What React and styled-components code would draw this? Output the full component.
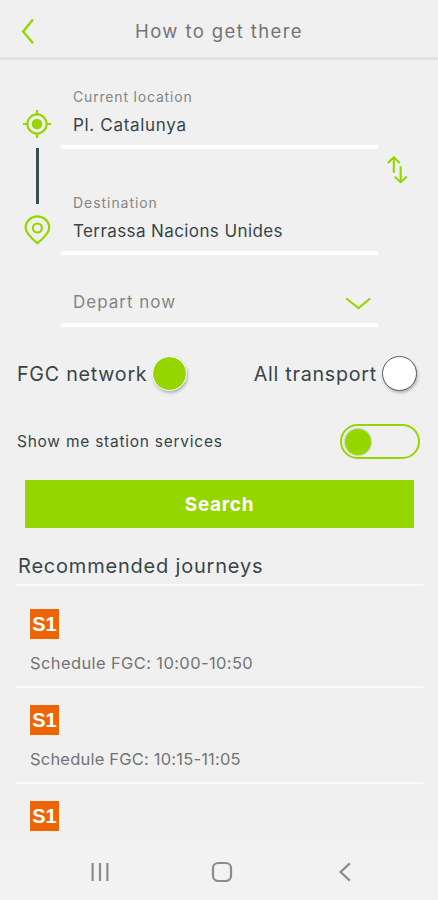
import React, { useState } from "react";
import styled, { createGlobalStyle } from "styled-components";

const journeys = [
  { id: 1, line: "S1", text: "Schedule FGC: 10:00-10:50", spacing: "0.38px" },
  { id: 2, line: "S1", text: "Schedule FGC: 10:15-11:05", spacing: "0.2px" },
  { id: 3, line: "S1" },
];

const App = () => {
  const [network, setNetwork] = useState("fgc");
  const [services, setServices] = useState(false);

  return (
    <>
      <GlobalStyle />
      <Screen>
        <Header>
          <BackButton aria-label="Back">
            <svg width="14" height="28" viewBox="0 0 14 28" fill="none" stroke="#96d600" strokeWidth="2.4">
              <path d="M12 2.5 2.2 14.5 12 26.2" />
            </svg>
          </BackButton>
          <Title>How to get there</Title>
        </Header>
        <Main>
          <Route>
            <RouteIcons>
              <svg width="30" height="30" viewBox="0 0 30 30" fill="none" stroke="#96d600" strokeWidth="2.2">
                <circle cx="15" cy="15" r="9.6" />
                <circle cx="15" cy="15" r="5.3" fill="#96d600" stroke="none" />
                <path d="M15 1v5M15 24v5M1 15h5M24 15h5" />
              </svg>
              <RouteLine />
              <svg width="30" height="32" viewBox="0 0 30 32" fill="none" stroke="#96d600" strokeWidth="2.2">
                <path d="M15.4 29.3C12 26 3.6 20.5 3.6 13.6a11.8 11.3 0 0 1 23.6 0C27.2 20.5 18.8 26 15.4 29.3Z" />
                <circle cx="15.4" cy="14" r="4.5" />
              </svg>
            </RouteIcons>
            <Fields>
              <Field>
                <Label $spacing="0.82px">Current location</Label>
                <Value $spacing="0.68px">Pl. Catalunya</Value>
              </Field>
              <Field>
                <Label $spacing="0.95px">Destination</Label>
                <Value $spacing="0.4px">Terrassa Nacions Unides</Value>
              </Field>
              <Select>
                Depart now
                <svg width="26" height="14" viewBox="0 0 26 14" fill="none" stroke="#96d600" strokeWidth="2.2" strokeLinecap="round">
                  <path d="M2 2 13.5 11 24.5 2" />
                </svg>
              </Select>
            </Fields>
            <SwapButton aria-label="Swap">
              <svg width="22" height="30" viewBox="0 0 22 30" fill="none" stroke="#96d600" strokeWidth="2.1" strokeLinecap="round" strokeLinejoin="round">
                <path d="M7.8 17V2.2M2.3 7.4 7.8 2.2 13.2 7.4" />
                <path d="M14.7 12v15.3M9.3 22.2 14.7 27.3 20.1 22.2" />
              </svg>
            </SwapButton>
          </Route>

          <Options>
            <Option onClick={() => setNetwork("fgc")}>
              <OptionText $spacing="0.75px">FGC network</OptionText>
              <Radio $active={network === "fgc"} />
            </Option>
            <Option onClick={() => setNetwork("all")}>
              <OptionText $spacing="0.75px">All transport</OptionText>
              <Radio $active={network === "all"} />
            </Option>
          </Options>

          <Services>
            Show me station services
            <Toggle $on={services} onClick={() => setServices(!services)} aria-label="Station services">
              <Knob />
            </Toggle>
          </Services>

          <SearchButton>Search</SearchButton>

          <Heading>Recommended journeys</Heading>
          <Journeys>
            {journeys.map((item) => (
              <Journey key={item.id}>
                <Badge>{item.line}</Badge>
                {item.text && <Schedule $spacing={item.spacing}>{item.text}</Schedule>}
              </Journey>
            ))}
          </Journeys>
        </Main>
        <NavBar>
          <svg width="20" height="20" viewBox="0 0 20 20" stroke="#8b8b8b" strokeWidth="2.2">
            <path d="M2.6 1v18M10 1v18M17.4 1v18" />
          </svg>
          <svg width="22" height="22" viewBox="0 0 22 22" fill="none" stroke="#8b8b8b" strokeWidth="2.2">
            <rect x="2" y="2" width="18" height="18" rx="5.2" />
          </svg>
          <svg width="14" height="20" viewBox="0 0 14 20" fill="none" stroke="#8b8b8b" strokeWidth="2.2">
            <path d="M12.8 1.4 3.6 10l9.2 8.6" />
          </svg>
        </NavBar>
      </Screen>
    </>
  );
};

export default App;

const GlobalStyle = createGlobalStyle`
  * {
    box-sizing: border-box;
  }
  body {
    margin: 0;
    background-color: #f0f0f0;
  }
  button {
    border: none;
    padding: 0;
    background: none;
    font-family: inherit;
    cursor: pointer;
  }
  svg {
    display: block;
    flex-shrink: 0;
  }
`;

const Screen = styled.div`
  display: flex;
  flex-direction: column;
  width: 438px;
  height: 900px;
  overflow: hidden;
  background-color: #f0f0f0;
  color: #374548;
  font-family: Inter, "Open Sans", sans-serif;
  white-space: nowrap;
`;

const Header = styled.header`
  display: grid;
  grid-template-columns: 60px 1fr 60px;
  align-items: center;
  flex-shrink: 0;
  height: 60px;
  padding-top: 2px;
  border-bottom: 3px solid #e1e1e1;
`;

const BackButton = styled.button`
  padding-left: 21px;
  margin-top: 3px;
`;

const Title = styled.h1`
  margin: 2px 0 0;
  color: #747474;
  font-size: 18.5px;
  font-weight: 400;
  letter-spacing: 1.4px;
  text-align: center;
`;

const Main = styled.main`
  flex: 1;
  min-height: 0;
  overflow: hidden;
`;

const Route = styled.section`
  display: grid;
  grid-template-columns: 61px 317px 1fr;
  padding-top: 26px;
`;

const RouteIcons = styled.div`
  display: flex;
  flex-direction: column;
  padding: 23px 0 0 22px;
`;

const RouteLine = styled.div`
  width: 3px;
  height: 56px;
  margin: 9px 0 10px 14px;
  background-color: #3b4d50;
`;

const Fields = styled.div`
  display: flex;
  flex-direction: column;
`;

const Field = styled.div`
  height: 63px;
  margin-bottom: 43px;
  padding-left: 12px;
  border-bottom: 4px solid #fff;
`;

const Label = styled.div`
  color: #858585;
  font-size: 14px;
  line-height: 21px;
  letter-spacing: ${(props) => props.$spacing};
`;

const Value = styled.div`
  font-size: 17px;
  line-height: 36px;
  letter-spacing: ${(props) => props.$spacing};
`;

const Select = styled.div`
  display: flex;
  align-items: center;
  justify-content: space-between;
  height: 48px;
  margin-top: -19px;
  padding: 2px 7px 0 12px;
  border-bottom: 4px solid #fff;
  color: #858585;
  font-size: 17px;
  letter-spacing: 1px;
  svg {
    margin-top: 4px;
  }
`;

const SwapButton = styled.button`
  align-self: start;
  margin-top: 69px;
  padding-left: 8px;
`;

const Options = styled.div`
  display: flex;
  justify-content: space-between;
  padding: 29px 21px 0 17px;
`;

const Option = styled.div`
  display: flex;
  align-items: center;
  gap: 5px;
  cursor: pointer;
`;

const OptionText = styled.span`
  font-size: 19.7px;
  letter-spacing: ${(props) => props.$spacing};
`;

const Radio = styled.span`
  width: 35px;
  height: 35px;
  border: ${(props) => (props.$active ? "1.5px solid #f8fbef" : "1.5px solid #5a6264")};
  border-radius: 50%;
  background-color: ${(props) => (props.$active ? "#96d600" : "#fff")};
  background-clip: padding-box;
  box-shadow: 1px 2px 3px rgba(0, 0, 0, 0.25);
`;

const Services = styled.div`
  display: flex;
  align-items: center;
  justify-content: space-between;
  height: 35px;
  margin: 33px 18px 21px 17px;
  font-size: 15.5px;
  letter-spacing: 0.75px;
`;

const Toggle = styled.button`
  display: flex;
  align-items: center;
  justify-content: ${(props) => (props.$on ? "flex-end" : "flex-start")};
  width: 80px;
  height: 35px;
  padding: 0 3px;
  border: 2px solid #96d600;
  border-radius: 18px;
`;

const Knob = styled.span`
  width: 26px;
  height: 26px;
  border-radius: 50%;
  background-color: #96d600;
  box-shadow: 0 0 1px 1px rgba(120, 150, 60, 0.3);
`;

const SearchButton = styled.button`
  display: block;
  width: 389px;
  height: 48px;
  margin-left: 25px;
  padding-top: 1px;
  background-color: #96d600;
  color: #fff;
  font-size: 19px;
  font-weight: 700;
  letter-spacing: 0.7px;
`;

const Heading = styled.h2`
  height: 58px;
  margin: 0 15px;
  padding: 20px 0 0 3px;
  border-bottom: 2px solid #fafafa;
  font-size: 20px;
  font-weight: 400;
  line-height: 37px;
  letter-spacing: 0.8px;
`;

const Journeys = styled.div`
  padding-top: 6px;
`;

const Journey = styled.div`
  height: 96px;
  margin: 0 15px;
  padding: 17px 0 0 15px;
  border-bottom: 2px solid #fafafa;
`;

const Badge = styled.div`
  width: 29px;
  height: 30px;
  background-color: #ec6608;
  color: #fff;
  font-family: "Liberation Sans", Arial, sans-serif;
  font-size: 20px;
  font-weight: 700;
  line-height: 31px;
  text-align: center;
`;

const Schedule = styled.div`
  margin-top: 12px;
  color: #747474;
  font-size: 16.5px;
  line-height: 24px;
  letter-spacing: ${(props) => props.$spacing};
`;

const NavBar = styled.nav`
  display: grid;
  grid-template-columns: 122px 122px 122px;
  justify-items: center;
  align-items: center;
  flex-shrink: 0;
  height: 60px;
  padding: 4px 0 0 39px;
  background-color: #f2f2f2;
`;
